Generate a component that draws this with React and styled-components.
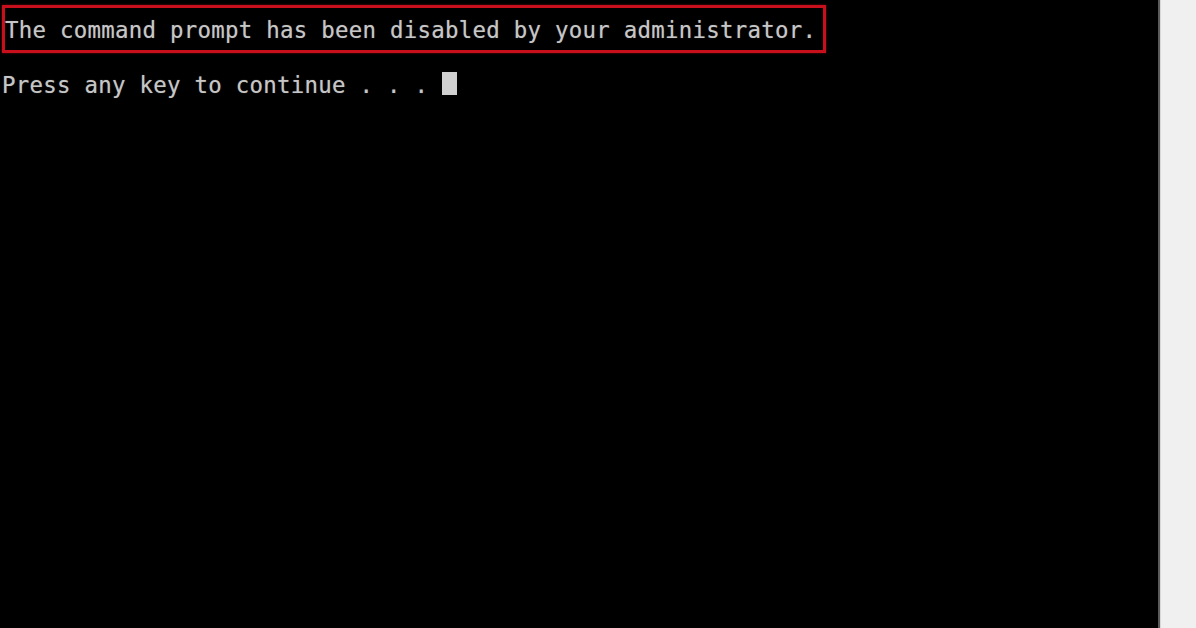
import React from "react";
import styled, { createGlobalStyle } from "styled-components";

const GlobalStyle = createGlobalStyle`
  html, body {
    margin: 0;
    padding: 0;
    background: #000;
  }
  #root {
    height: 628px;
  }
`;

const Page = styled.div`
  display: flex;
  width: 1196px;
  height: 628px;
  overflow: hidden;
`;

const Console = styled.div`
  flex: 1;
  background: #000;
  padding: 5px 0 0 2px;
  font-family: "DejaVu Sans Mono", "Liberation Mono", monospace;
  font-size: 22.4px;
  letter-spacing: 0.27px;
  line-height: 27.5px;
  color: #c6c6c6;
  white-space: pre;
  text-shadow: 0 0 1px rgba(198, 198, 198, 0.5);
`;

const Highlight = styled.div`
  display: inline-block;
  border: 3px solid #c8101c;
  padding: 8.5px 7px 6px 0;
  box-shadow: 0 0 2px rgba(200, 16, 28, 0.6);
`;

const Line = styled.div`
  margin-top: ${(p) => p.$gap || 0}px;
  display: flex;
  align-items: center;
`;

const Cursor = styled.span`
  display: inline-block;
  width: 15px;
  height: 23px;
  margin-top: -3px;
  background: #d0d0d0;
`;

const Scrollbar = styled.div`
  width: 36px;
  background: #f0f0f0;
  border-left: 2px solid #5a5a5a;
  box-shadow: inset 1px 0 0 #d8d8d8;
`;

export default function App() {
  return (
    <>
      <GlobalStyle />
      <Page>
        <Console>
          <Highlight>
            <Line>The command prompt has been disabled by your administrator.</Line>
          </Highlight>
          <Line $gap={18.5}>
            {"Press any key to continue . . . "}
            <Cursor />
          </Line>
        </Console>
        <Scrollbar />
      </Page>
    </>
  );
}
